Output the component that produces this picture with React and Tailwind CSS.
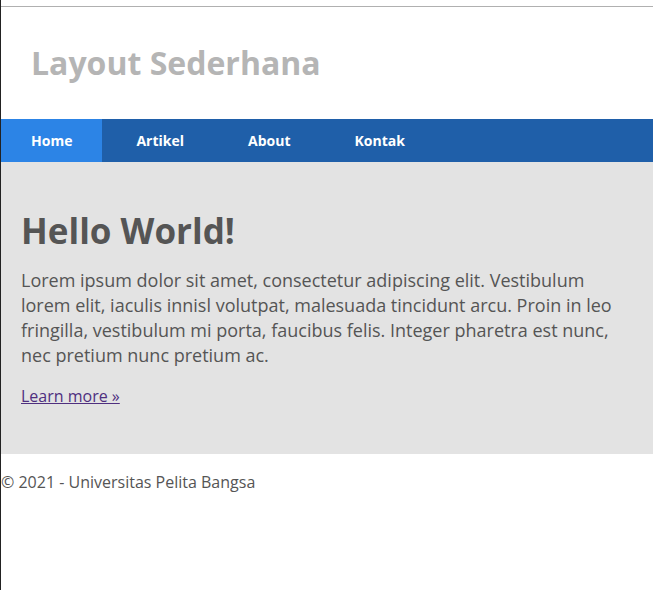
import React from 'react';

const menu = ['Home', 'Artikel', 'About', 'Kontak'];

const App = () => {
    return (
        <div className="min-h-[590px] bg-white border-l border-[#222222] text-[#555555]" style={{ fontFamily: '"Open Sans", sans-serif' }}>
            <div className="h-[6px]" />
            <div className="border-t border-[#b0b0b0]">
                {/* header */}
                <header className="h-[112px] flex items-center px-[30px]">
                    <h1 className="text-[32px] font-bold text-[#b5b5b5] leading-[1.2]">Layout Sederhana</h1>
                </header>

                {/* nav */}
                <nav className="bg-[#1f5fa9]">
                    <ul className="flex gap-[4px]">
                        {menu.map((item, i) => (
                            <li key={item}>
                                <a
                                    href="#"
                                    className={
                                        i === 0
                                            ? 'block px-[30px] h-[43px] leading-[43px] text-[14px] font-bold text-white bg-[#2c84e6]'
                                            : 'block px-[30px] h-[43px] leading-[43px] text-[14px] font-bold text-white'
                                    }
                                >
                                    {item}
                                </a>
                            </li>
                        ))}
                    </ul>
                </nav>

                {/* hero */}
                <section className="bg-[#e3e3e3] pt-[48px] pb-[45px] pl-[20px] pr-[20px]">
                    <h2 className="text-[35px] font-bold leading-[42px] text-[#555555]">Hello World!</h2>
                    <p className="mt-[16px] text-[18px] leading-[25px]">
                        Lorem ipsum dolor sit amet, consectetur adipiscing elit. Vestibulum lorem elit, iaculis innisl volutpat, malesuada tincidunt arcu. Proin in leo fringilla, vestibulum mi porta, faucibus felis. Integer pharetra est nunc, nec pretium nunc pretium ac.
                    </p>
                    <p className="mt-[16px] text-[16px] leading-[25px]">
                        <a href="#" className="underline text-[#4f2f7f]">Learn more &raquo;</a>
                    </p>
                </section>

                {/* footer */}
                <footer className="pt-[16px] text-[16px] leading-[24px]">
                    &copy; 2021 - Universitas Pelita Bangsa
                </footer>
            </div>
        </div>
    );
};

export default App;
